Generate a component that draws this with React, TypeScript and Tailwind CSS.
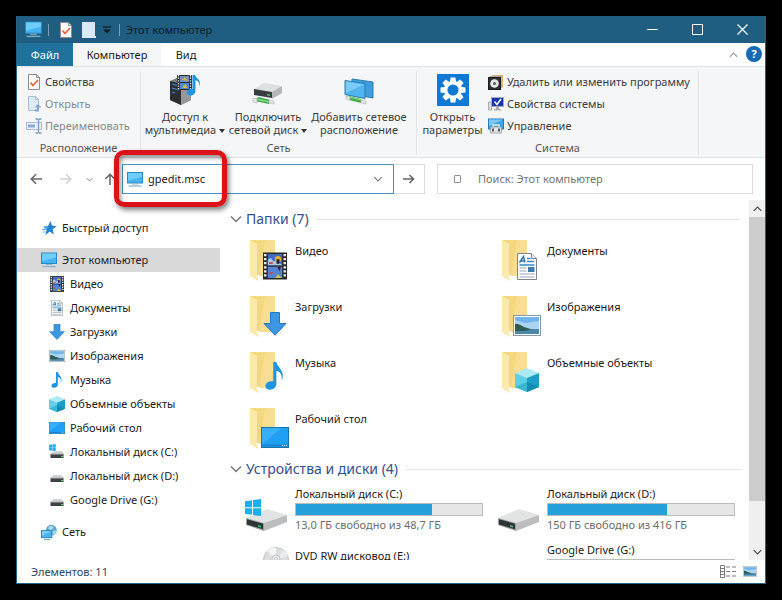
import React from "react";

type IconProps = { className?: string };

function Monitor({ className = "h-4 w-4" }: IconProps) {
  return (
    <svg viewBox="0 0 16 16" className={className} aria-hidden="true">
      <rect x="0.5" y="1" width="15" height="10.5" fill="#46b4f2" stroke="#2b87bd" />
      <path d="M1 1.5h14v4L1 9z" fill="#6fcdfb" />
      <path d="M5 12.5h6" stroke="#9fb4c2" />
      <path d="M1.5 14.5h13" stroke="#7fb2cf" strokeWidth="1.2" />
    </svg>
  );
}

function CheckDoc({ className = "h-4 w-4" }: IconProps) {
  return (
    <svg viewBox="0 0 16 16" className={className} aria-hidden="true">
      <path d="M2.5.5h8l3 3v12h-11z" fill="#fdfdfd" stroke="#8d8d8d" />
      <path d="M10.5.5v3h3" fill="none" stroke="#8d8d8d" />
      <path d="M4.5 8.5l2.5 3 5-5.5" fill="none" stroke="#e2653a" strokeWidth="1.7" />
    </svg>
  );
}

function OpenDoc({ className = "h-4 w-4" }: IconProps) {
  return (
    <svg viewBox="0 0 16 16" className={className} aria-hidden="true">
      <path d="M2.5.5h7l3 3v11h-10z" fill="#dfeaf7" stroke="#a9bdd6" />
      <path d="M9.500.5v3h3" fill="none" stroke="#a9bdd6" />
      <path d="M9 15.500h4v-4h2.500L12 8 8.500 11.500H11v2H9z" fill="#8aa6c9" />
    </svg>
  );
}

function RenameIcon() {
  return (
    <svg viewBox="0 0 16 16" className="h-4 w-4" aria-hidden="true">
      <rect x="0.5" y="4.500" width="15" height="7" fill="#e9f0f8" stroke="#a9bdd6" />
      <rect x="2" y="6.500" width="7" height="3" fill="#8fabcf" />
      <path d="M9.500 1h2l1 1 1-1h2M12.500 2v12M9.500 15h2l1-1 1 1h2" fill="none" stroke="#7f9cc2" strokeWidth="1.300" />
    </svg>
  );
}

function Note({ className = "h-4 w-4" }: IconProps) {
  return (
    <svg viewBox="0 0 16 16" className={className} aria-hidden="true">
      <path d="M7 0h1.800c.3 3 4.700 4.500 3.500 9.500-.2.800-.6.800-.5.200.3-2.800-1-4.200-3-4.700v7.600c0 1.800-1.700 3.200-3.600 3.200C3.700 15.800 2.500 15 2.500 13.700c0-1.700 2-3 4.500-2.700z" fill="#1e95e4" />
    </svg>
  );
}

function Film({ className = "h-4 w-4" }: IconProps) {
  return (
    <svg viewBox="0 0 16 18" className={className} aria-hidden="true">
      <rect width="16" height="18" fill="#282828" />
      <path d="M1.500 1v16M14.500 1v16" stroke="#f1f1f1" strokeWidth="1.600" strokeDasharray="1.500 1.200" />
      <rect x="3.200" y="1" width="9.600" height="7.500" fill="#3e6bc0" />
      <rect x="3.200" y="9.500" width="9.600" height="7.500" fill="#5185d4" />
      <path d="M3.200 5l2-1.500L7 6l2-1 3.800 3.500H3.200z" fill="#a9c9ec" />
      <circle cx="10" cy="4.500" r="2.100" fill="#e0b52c" />
      <path d="M9 4.500h2v3H9zM9.500 9.500h2.500l-1 3z" fill="#281d3c" />
      <path d="M4 6.500h2.500v1.200H4zM4 13h3l-1.500 2z" fill="#c94747" />
      <path d="M8 17l2-2.500 2.500 2.500z" fill="#d9c043" />
    </svg>
  );
}

function DocIcon({ className = "h-4 w-4" }: IconProps) {
  return (
    <svg viewBox="0 0 20 27" className={className} aria-hidden="true">
      <path d="M.500.500h14l5 5v21h-19z" fill="#fff" stroke="#7a858e" />
      <path d="M14.500.500v5h5" fill="#e9eef2" stroke="#7a858e" />
      <path d="M2.500 9.500l4-6 1.500 6M4 8h3.500" fill="none" stroke="#2c77b5" strokeWidth="1.500" />
      <path d="M10 5.500h3.500M10 8.500h7M2.500 12h15" stroke="#3888c6" strokeWidth="1.500" />
      <rect x="11" y="14" width="6.500" height="5" fill="#3e7cab" />
      <path d="M2.500 15h7M2.500 18h7M2.500 21h15M2.500 24h15" stroke="#9aa6b0" strokeWidth="1.200" />
    </svg>
  );
}

function DownArrow({ className = "h-4 w-4" }: IconProps) {
  return (
    <svg viewBox="0 0 24 24" className={className} aria-hidden="true">
      <path d="M7.500.500h9v11h6.500L12 23.300 1 11.500h6.500z" fill="#3b97e3" stroke="#2778bd" />
    </svg>
  );
}

function Picture({ className = "h-4 w-4" }: IconProps) {
  return (
    <svg viewBox="0 0 28 21" className={className} aria-hidden="true">
      <rect x="0.500" y="0.500" width="27" height="20" fill="#fff" stroke="#8799a8" />
      <rect x="2" y="2" width="24" height="17" fill="#a9d6f3" />
      <path d="M2 2h24v4L12 8 2 5z" fill="#72b5e8" />
      <path d="M2 9c4-1 6 2 9 3l10 3H2z" fill="#315e4b" />
      <path d="M2 14h24v5H2z" fill="#4d87a8" />
      <path d="M2 14h18l-8 2H2z" fill="#2f5b60" />
    </svg>
  );
}

function Cube({ className = "h-4 w-4" }: IconProps) {
  return (
    <svg viewBox="0 0 24 24" className={className} aria-hidden="true">
      <path d="M12 0l12 5-12 5L0 5z" fill="#aeeaf5" />
      <path d="M0 5l12 5v14L0 19z" fill="#5fcfe5" />
      <path d="M24 5l-12 5v14l12-5z" fill="#1b9fc4" />
      <path d="M0 19l12-5v10z" fill="#37b6d3" />
      <path d="M24 19l-12-5v10z" fill="#128cb4" />
    </svg>
  );
}

function DesktopIcon({ className = "h-4 w-4" }: IconProps) {
  return (
    <svg viewBox="0 0 28 21" className={className} aria-hidden="true">
      <rect x="0.500" y="0.500" width="27" height="20" fill="#1fa0f4" stroke="#1772ae" />
      <path d="M1 1h20L1 17z" fill="#39aef9" />
      <path d="M1 18.500h26" stroke="#1783d0" strokeWidth="2" />
      <path d="M21 18.500h5" stroke="#d4eefe" strokeDasharray="1 1" />
    </svg>
  );
}

function WinFlag() {
  return <path d="M0 2.300l7-1v6.900H0zM8 1.100L16 0v8.200H8zM0 9.200h7v6.600l-7-1zM8 9.200h8V17l-8-1z" fill="#17b1e8" />;
}

function SmallDrive({ windows = false }: { windows?: boolean }) {
  return (
    <svg viewBox="0 0 16 16" className="h-4 w-4" aria-hidden="true">
      <path d="M4.500 7h8l2.500 3H1.500z" fill="#cfd1d2" />
      <rect x="1.500" y="10" width="13" height="4" fill="#3d4144" />
      <path d="M1.500 10.300h13" stroke="#8a8d90" />
      <rect x="12" y="12" width="2" height="1" fill="#58d66c" />
      {windows && (
        <g transform="translate(0 0) scale(.42)">
          <rect x="-1" y="-1" width="18" height="19" fill="#fff" />
          <WinFlag />
        </g>
      )}
    </svg>
  );
}

function LargeDrive({ windows = false }: { windows?: boolean }) {
  return (
    <svg viewBox="0 0 44 34" className="h-[34px] w-[44px]" aria-hidden="true">
      <path d="M1 19L22 10l20 6-23 8z" fill="#e2e3e3" />
      <path d="M19 24l23-8v7L19 32z" fill="#bcbdbe" />
      <path d="M1 19l18 5v8L1 26z" fill="#9a9c9d" />
      <path d="M2 20.300l16 4.400v5.600L2 25.500z" fill="#303335" />
      <path d="M13 26l3 .800v1.700l-3-.800z" fill="#38b765" />
      {windows && <WinFlag />}
    </svg>
  );
}

function Disc() {
  return (
    <svg viewBox="0 0 26 26" className="h-[26px] w-[26px]" aria-hidden="true">
      <circle cx="13" cy="13" r="12.500" fill="#dcdedf" stroke="#bfc2c4" />
      <path d="M13 13L4 4a13 13 0 0 1 9-3.500z" fill="#f4f5f5" />
      <path d="M13 13l12-4a12 12 0 0 0-5-6z" fill="#eceeee" />
      <circle cx="13" cy="12" r="4" fill="#f3f4f4" stroke="#b9bdbf" />
      <circle cx="13" cy="12" r="1.500" fill="#fff" stroke="#b9bdbf" />
    </svg>
  );
}

function Star() {
  return (
    <svg viewBox="0 0 16 16" className="h-4 w-4" aria-hidden="true">
      <path d="M9.500 1l1.400 4.600 4.800.600-4 3 1.200 5.200-4.300-2.800-4.200 3.600 1.200-5.500L2 6.700l5-.7z" fill="#2583d3" />
      <path d="M3 6.700l4-.2-1.500 4z" fill="#58ace9" />
      <path d="M1 9.500h3.500M2 12h2.500" stroke="#58ace9" strokeWidth="1.200" />
    </svg>
  );
}

function NetworkIcon() {
  return (
    <svg viewBox="0 0 17 17" className="h-[17px] w-[17px]" aria-hidden="true">
      <circle cx="11" cy="6" r="5.700" fill="#5aa6cf" />
      <path d="M8 2.500c2-2 5-1 5.500 1L11 6 8 5zM12 7l4-1-1 4-3 1z" fill="#a5dbe4" />
      <rect x="0.500" y="6.500" width="11" height="7.500" fill="#49b3f0" stroke="#2d7fb5" />
      <path d="M1 7h10l-10 5z" fill="#7fd0fb" />
      <path d="M3 16h7" stroke="#7aa6c4" strokeWidth="1.200" />
    </svg>
  );
}

function MediaServer() {
  return (
    <svg viewBox="0 0 32 32" className="h-8 w-8" aria-hidden="true">
      <path d="M1 7l9-4 12 3v20l-10 5L1 26z" fill="#7b7e81" />
      <path d="M1 7l11 3v21L1 26z" fill="#2b2e31" />
      <path d="M3 10l7 2M3 14l7 2M3 18l3 1" stroke="#3e92d9" strokeWidth="1.300" />
      <path d="M12 16l10-3v13l-10 5z" fill="#96999b" />
      <rect x="8" y="1" width="15" height="15" fill="#282828" />
      <path d="M9.500 1v15M21.500 1v15" stroke="#eee" strokeWidth="1.400" strokeDasharray="1.400 1.200" />
      <rect x="11" y="2" width="9" height="6" fill="#728cc4" />
      <rect x="11" y="9" width="9" height="6" fill="#5385d3" />
      <path d="M13 6l3-3 3 4zM13 14l3-4 3 4z" fill="#d0b84c" />
      <path d="M23.500 1H26c.500 3 6 4 4.800 10-.300 1-.800 1-.600.200.3-3-1.200-4.500-3.800-5V17c0 2.500-2.300 4.500-5 4.500-2.200 0-3.600-1.200-3.600-3 0-2.300 2.500-4 5.700-3.500z" fill="#1e95e4" />
    </svg>
  );
}

function NetDrive() {
  return (
    <svg viewBox="0 0 32 32" className="h-8 w-8" aria-hidden="true">
      <path d="M2 15l10-6 18 3-10 6z" fill="#dedfe0" />
      <path d="M20 18l10-6v7l-10 6z" fill="#b4b6b8" />
      <path d="M2 15l18 3v6L2 21z" fill="#3a3d40" />
      <path d="M15 20l3 .500v1.500l-3-.500z" fill="#41c66b" />
      <path d="M3 25l4-2 11 3-1 4-5-1-9-2z" fill="#42ab4a" />
      <path d="M4 25l13 3" stroke="#84d884" strokeWidth="1.500" />
      <path d="M1 24l4 1v4l-4-1zM17 26l5 1v3l-5-1z" fill="#e4e6e7" stroke="#a4a8aa" strokeWidth=".5" />
    </svg>
  );
}

function NetPlace() {
  return (
    <svg viewBox="0 0 32 32" className="h-8 w-8" aria-hidden="true">
      <path d="M9 5l21 3v16L9 20z" fill="#3d9fdd" stroke="#2c7cae" />
      <path d="M2 6.500l20 3v15l-20-4z" fill="#50b4ee" stroke="#2c7cae" />
      <path d="M3 7.500l18 3L3 19z" fill="#7ccbf7" />
      <path d="M6 22l12 3v4L6 26z" fill="#42ab4a" />
      <path d="M6 23l12 3" stroke="#8be08b" />
      <path d="M3 22l4 1v3l-4-1zM18 26l5 1v3l-5-1z" fill="#e4e6e7" stroke="#a4a8aa" strokeWidth=".5" />
    </svg>
  );
}

function SettingsTile() {
  const teeth = [0, 45, 90, 135, 180, 225, 270, 315];
  return (
    <svg viewBox="0 0 32 32" className="h-8 w-8" aria-hidden="true">
      <rect width="32" height="32" fill="#0f79d3" />
      {teeth.map((angle) => (
        <path key={angle} d="M13.600 3.500h4.800l.8 5h-6.400z" fill="#fff" transform={`rotate(${angle} 16 16)`} />
      ))}
      <circle cx="16" cy="16" r="7.300" fill="none" stroke="#fff" strokeWidth="3.400" />
    </svg>
  );
}

function ProgramIcon() {
  return (
    <svg viewBox="0 0 16 16" className="h-4 w-4" aria-hidden="true">
      <path d="M4 1h11v12l-3 2V3H4z" fill="#d9b469" />
      <path d="M2 2h11v2H2z" fill="#9fa2a5" />
      <rect x="0.500" y="3.500" width="12" height="12" fill="#2d2e30" stroke="#1a1a1b" />
      <circle cx="6.500" cy="9.500" r="4.300" fill="#e6e8ea" />
      <circle cx="6.500" cy="9.500" r="1.500" fill="#55585b" />
    </svg>
  );
}

function SystemIcon() {
  return (
    <svg viewBox="0 0 16 16" className="h-4 w-4" aria-hidden="true">
      <path d="M.500 6h3v8h-3z" fill="#d9dbdd" stroke="#8e9296" strokeWidth=".7" />
      <rect x="3.500" y="1.500" width="12" height="9" fill="#1c33b0" stroke="#a5abb5" />
      <path d="M6.500 5.500L9 8.500l4-5.500" fill="none" stroke="#fff" strokeWidth="1.500" />
      <path d="M8 11h3v2h2v1.500H6V13h2z" fill="#a9adb2" />
    </svg>
  );
}

function ManageIcon() {
  return (
    <svg viewBox="0 0 16 16" className="h-4 w-4" aria-hidden="true">
      <rect x="0.500" y="1" width="15" height="10" fill="#3aa6e8" stroke="#2a79ad" />
      <path d="M1 1.500h14L1 8z" fill="#79c8f5" />
      <path d="M5 9V7h6v2" fill="none" stroke="#e8eaec" strokeWidth="1.300" />
      <rect x="2.500" y="9" width="11" height="6" fill="#e3e5e7" stroke="#8b9095" strokeWidth=".7" />
      <path d="M5 10.500v3M11 10.500v3" stroke="#4a4e52" strokeWidth="1.800" />
    </svg>
  );
}

function Folder({ children }: { children: React.ReactNode }) {
  return (
    <span className="relative block h-[44px] w-[44px] shrink-0">
      <svg viewBox="0 0 44 44" className="h-[44px] w-[44px]" aria-hidden="true">
        <path d="M5 0h25v36H12z" fill="#f5d77e" />
        <path d="M20 0h10v36H14z" fill="#f8de90" />
        <path d="M5 0l9 5v31l-1 5-8-5z" fill="#fbe9ae" />
        <path d="M13 5v32" stroke="#e6c366" />
        <path d="M11 35h3v5z" fill="#fff" />
      </svg>
      <span className="absolute right-0 bottom-1 flex w-[28px] justify-center">{children}</span>
    </span>
  );
}

function Arrow({ d, className }: { d: string; className: string }) {
  return (
    <svg viewBox="0 0 14 14" className={`h-3 w-3 ${className}`} aria-hidden="true">
      <path d={d} fill="none" stroke="currentColor" strokeWidth="1.800" />
    </svg>
  );
}

function Chevron({ className = "h-2 w-3", up = false }: { className?: string; up?: boolean }) {
  return (
    <svg viewBox="0 0 12 8" className={className} aria-hidden="true">
      <path d={up ? "M1 6.500l5-5 5 5" : "M1 1.500l5 5 5-5"} fill="none" stroke="currentColor" strokeWidth="1.500" />
    </svg>
  );
}

function Caret() {
  return <span className="ml-[3px] inline-block border-x-[3px] border-t-4 border-x-transparent border-t-[#333] align-middle" />;
}

const navItems = [
  { name: "Видео", icon: <Film className="h-4 w-[14px]" /> },
  { name: "Документы", icon: <DocIcon className="h-4 w-3" /> },
  { name: "Загрузки", icon: <DownArrow /> },
  { name: "Изображения", icon: <Picture /> },
  { name: "Музыка", icon: <Note /> },
  { name: "Объемные объекты", icon: <Cube /> },
  { name: "Рабочий стол", icon: <DesktopIcon /> },
  { name: "Локальный диск (C:)", icon: <SmallDrive windows /> },
  { name: "Локальный диск (D:)", icon: <SmallDrive /> },
  { name: "Google Drive (G:)", icon: <SmallDrive /> },
];

const folders = [
  { name: "Видео", icon: <Film className="h-[28px] w-[24px]" /> },
  { name: "Документы", icon: <DocIcon className="h-[27px] w-5" /> },
  { name: "Загрузки", icon: <DownArrow className="h-6 w-6" /> },
  { name: "Изображения", icon: <Picture className="h-[21px] w-7" /> },
  { name: "Музыка", icon: <Note className="h-8 w-8" /> },
  { name: "Объемные объекты", icon: <Cube className="h-6 w-6" /> },
  { name: "Рабочий стол", icon: <DesktopIcon className="h-[21px] w-7" /> },
];

function NavLink({ name, icon, child, active }: { name: string; icon: React.ReactNode; child?: boolean; active?: boolean }) {
  return (
    <a
      href="#"
      className={`flex h-6 items-center gap-[5px] whitespace-nowrap ${child ? "pl-8" : "pl-6"} ${active ? "bg-[#d9d9d9]" : ""}`}
    >
      <span className="flex w-4 shrink-0 justify-center">{icon}</span>
      {name}
    </a>
  );
}

function SectionHeader({ children }: { children: React.ReactNode }) {
  return (
    <h2 className="flex h-6 items-center gap-2 pr-2">
      <button className="flex items-center gap-1 text-[14px] whitespace-nowrap text-[#33508f]">
        <Chevron className="h-2 w-3 text-[#777]" />
        {children}
      </button>
      <span className="h-px flex-1 bg-[#e5e5e5]" />
    </h2>
  );
}

function DriveTile({ name, free, used, windows }: { name: string; free: string; used: number; windows?: boolean }) {
  return (
    <a href="#" className="flex h-14 gap-[6px]">
      <span className="flex w-[44px] shrink-0 pt-[14px]">
        <LargeDrive windows={windows} />
      </span>
      <span className="flex w-[188px] flex-col whitespace-nowrap">
        <span className="h-[18px] leading-[18px]">{name}</span>
        <span
          role="progressbar"
          aria-label={name}
          aria-valuenow={used}
          className="block h-[13px] shrink-0 border border-[#bcbcbc] bg-[#e6e6e6]"
        >
          <span className="block h-full bg-[#26a0da]" style={{ width: `${used}%` }} />
        </span>
        <span className="leading-[18px] text-[#6d6d6d]">{free}</span>
      </span>
    </a>
  );
}

function RibbonGroup({ title, className = "", children }: { title: string; className?: string; children: React.ReactNode }) {
  return (
    <section className={`mt-1 mb-[2px] flex flex-col border-r border-[#e2e3e4] ${className}`} aria-label={title}>
      <div className="flex flex-1">{children}</div>
      <p className="text-center leading-[14px] text-[#555]">{title}</p>
    </section>
  );
}

function RibbonRow({ icon, children, muted }: { icon: React.ReactNode; children: React.ReactNode; muted?: boolean }) {
  return (
    <button className={`flex h-[22px] items-center gap-[3px] whitespace-nowrap ${muted ? "text-[#8a8a8a]" : ""}`}>
      {icon}
      {children}
    </button>
  );
}

function RibbonButton({ icon, className, children }: { icon: React.ReactNode; className: string; children: React.ReactNode }) {
  return (
    <button className={`flex shrink-0 flex-col items-center gap-1 pt-[3px] leading-[13px] whitespace-nowrap ${className}`}>
      {icon}
      <span>{children}</span>
    </button>
  );
}

export default function App() {
  return (
    <div className="flex h-screen bg-black p-4 font-['Noto_Sans','Open_Sans',sans-serif] text-[11px] leading-4 text-[#1b1b1b]">
      <main className="flex min-w-0 flex-1 flex-col overflow-hidden border border-t-0 border-[#236486] bg-white">
        <header className="flex h-[27px] shrink-0 items-center bg-[#1f5e80] pl-2">
          <Monitor className="h-[17px] w-[17px]" />
          <span className="ml-[6px] h-3 w-px bg-[#7ba0b4]" />
          <button aria-label="Свойства" className="ml-[9px]">
            <CheckDoc />
          </button>
          <button aria-label="Новая папка" className="ml-2">
            <svg viewBox="0 0 14 16" className="h-4 w-[14px]" aria-hidden="true">
              <path d="M0 0h13v14h1v2H0z" fill="#dce8f7" />
            </svg>
          </button>
          <button aria-label="Настроить панель" className="ml-[7px]">
            <svg viewBox="0 0 8 8" className="h-2 w-2" aria-hidden="true">
              <path d="M0 1h8" stroke="#101b22" strokeWidth="1.300" />
              <path d="M0 3.500h8L4 7.500z" fill="#101b22" />
            </svg>
          </button>
          <span className="ml-2 h-3 w-px bg-[#7ba0b4]" />
          <h1 className="ml-[6px] flex-1 text-[11px] text-[#0b1c27]">Этот компьютер</h1>
          <div className="flex text-white">
            <button aria-label="Свернуть" className="flex w-[45px] justify-center">
              <svg viewBox="0 0 11 11" className="h-[11px] w-[11px]"><path d="M0 5.500h11" stroke="currentColor" /></svg>
            </button>
            <button aria-label="Развернуть" className="flex w-[45px] justify-center">
              <svg viewBox="0 0 11 11" className="h-[11px] w-[11px]"><path d="M.500.500h10v10H.500z" fill="none" stroke="currentColor" /></svg>
            </button>
            <button aria-label="Закрыть" className="flex w-[45px] justify-center">
              <svg viewBox="0 0 11 11" className="h-[11px] w-[11px]"><path d="M.500.500l10 10M10.500.500l-10 10" stroke="currentColor" strokeWidth="1.200" /></svg>
            </button>
          </div>
        </header>

        <nav className="flex h-[23px] shrink-0 items-stretch" aria-label="Вкладки ленты">
          <button className="w-14 bg-[#1f729c] text-white">Файл</button>
          <button className="w-[88px] bg-[#f5f6f7]">Компьютер</button>
          <button className="w-[50px]">Вид</button>
          <span className="flex-1" />
          <button aria-label="Свернуть ленту" className="px-2 text-[#9a9a9a]">
            <Chevron up className="h-[6px] w-[9px]" />
          </button>
          <button
            aria-label="Справка"
            className="mt-[3px] mr-[3px] h-4 w-4 rounded-full bg-[#1569b5] text-center font-bold text-white"
          >
            ?
          </button>
        </nav>

        <div className="flex h-[92px] shrink-0 overflow-hidden border-t border-b border-[#e1e2e4] bg-[#f5f6f7] text-[#3c3c3c]">
          <RibbonGroup title="Расположение" className="w-[124px] shrink-0">
            <div className="flex flex-col pl-[9px]">
              <RibbonRow icon={<CheckDoc />}>Свойства</RibbonRow>
              <RibbonRow muted icon={<OpenDoc />}>Открыть</RibbonRow>
              <RibbonRow muted icon={<RenameIcon />}>Переименовать</RibbonRow>
            </div>
          </RibbonGroup>
          <RibbonGroup title="Сеть" className="w-[276px] shrink-0">
            <RibbonButton icon={<MediaServer />} className="w-[88px]">
              Доступ к<br />мультимедиа<Caret />
            </RibbonButton>
            <RibbonButton icon={<NetDrive />} className="w-[78px]">
              Подключить<br />сетевой диск<Caret />
            </RibbonButton>
            <RibbonButton icon={<NetPlace />} className="w-[104px]">
              Добавить сетевое<br />расположение
            </RibbonButton>
          </RibbonGroup>
          <RibbonGroup title="Система" className="w-[282px] shrink-0">
            <RibbonButton icon={<SettingsTile />} className="w-[71px]">
              Открыть<br />параметры
            </RibbonButton>
            <div className="flex flex-col">
              <RibbonRow icon={<ProgramIcon />}>Удалить или изменить программу</RibbonRow>
              <RibbonRow icon={<SystemIcon />}>Свойства системы</RibbonRow>
              <RibbonRow icon={<ManageIcon />}>Управление</RibbonRow>
            </div>
          </RibbonGroup>
        </div>

        <div className="flex h-[42px] shrink-0 items-center pr-3 pl-[13px]">
          <button aria-label="Назад"><Arrow className="text-[#666]" d="M14 7H1.500M7 1.500L1.500 7 7 12.500" /></button>
          <button aria-label="Вперед" className="ml-[18px]"><Arrow className="text-[#d2d2d2]" d="M0 7h12.500M7 1.500L12.500 7 7 12.500" /></button>
          <button aria-label="Последние расположения" className="ml-[14px] text-[#777]"><Chevron className="h-[5px] w-[7px]" /></button>
          <button aria-label="Вверх" className="ml-[11px]"><Arrow className="text-[#666]" d="M7 14V1.500M1.500 7L7 1.500 12.500 7" /></button>
          <div className="relative ml-[6px] flex h-[30px] flex-[266] items-center border border-[#4a93bf] pl-1">
            <Monitor className="h-[17px] w-4 shrink-0" />
            <input aria-label="Адрес" defaultValue="gpedit.msc" className="ml-[5px] min-w-0 flex-1 outline-none" />
            <button aria-label="Показать адреса" className="mr-[10px] text-[#777]"><Chevron className="h-[6px] w-[10px]" /></button>
            <span className="pointer-events-none absolute -top-[15px] -left-[9px] z-10 h-[57px] w-[113px] rounded-[10px] border-[5px] border-[#dc1219] shadow-[2px_3px_5px_rgba(0,0,0,0.5),inset_2px_3px_4px_rgba(0,0,0,0.4)]" />
          </div>
          <button aria-label="Перейти" className="flex h-[30px] w-[31px] items-center justify-center border border-l-0 border-[#dcdcdc]">
            <svg viewBox="0 0 12 10" className="h-[10px] w-3" aria-hidden="true">
              <path d="M0 5h10.500M6.500 1l4 4-4 4" fill="none" stroke="#666" strokeWidth="1.600" />
            </svg>
          </button>
          <label className="ml-3 flex h-[30px] flex-[298] items-center border border-[#dcdcdc] pl-4">
            <span className="h-2 w-[7px] rounded-[1px] border border-[#909090]" />
            <input placeholder="Поиск: Этот компьютер" aria-label="Поиск" className="ml-[17px] min-w-0 flex-1 outline-none placeholder:text-[#757575]" />
          </label>
        </div>

        <div className="flex min-h-0 flex-1">
          <nav className="w-[203px] shrink-0 overflow-hidden pt-4" aria-label="Область навигации">
            <NavLink name="Быстрый доступ" icon={<Star />} />
            <div className="my-2">
              <NavLink active name="Этот компьютер" icon={<Monitor />} />
              {navItems.map((item) => (
                <NavLink key={item.name} child {...item} />
              ))}
            </div>
            <NavLink name="Сеть" icon={<NetworkIcon />} />
          </nav>

          <div className="min-w-0 flex-1 overflow-hidden pt-[7px] pl-[10px]">
            <SectionHeader>Папки (7)</SectionHeader>
            <div className="mt-[3px] grid grid-cols-[repeat(auto-fill,minmax(240px,1fr))] pl-[15px]">
              {folders.map((folder) => (
                <a key={folder.name} href="#" className="flex h-14 gap-[6px] pt-[6px]">
                  <Folder>{folder.icon}</Folder>
                  <span className="pt-[3px]">{folder.name}</span>
                </a>
              ))}
            </div>
            <div className="mt-[-1px]">
              <SectionHeader>Устройства и диски (4)</SectionHeader>
            </div>
            <div className="mt-1 grid grid-cols-[repeat(auto-fill,minmax(240px,1fr))] pl-[15px]">
              <DriveTile windows name="Локальный диск (C:)" used={73} free="13,0 ГБ свободно из 48,7 ГБ" />
              <DriveTile name="Локальный диск (D:)" used={64} free="150 ГБ свободно из 416 ГБ" />
              <a href="#" className="flex h-14 gap-[6px] pt-[6px]">
                <span className="flex w-[44px] shrink-0 justify-end"><Disc /></span>
                <span className="leading-[18px]">DVD RW дисковод (E:)</span>
              </a>
              <DriveTile name="Google Drive (G:)" used={10} free="" />
            </div>
          </div>

          <div className="flex w-4 shrink-0 flex-col bg-[#f0f0f0]" aria-hidden="true">
            <span className="flex h-[17px] items-center justify-center text-[#444]"><Chevron up className="h-[6px] w-[9px]" /></span>
            <span className="flex flex-1 flex-col">
              <span className="h-[87%] bg-[#cdcdcd]" />
            </span>
            <span className="flex h-[17px] items-center justify-center text-[#444]"><Chevron className="h-[6px] w-[9px]" /></span>
          </div>
        </div>

        <footer className="flex h-[23px] shrink-0 items-center gap-[7px] pr-2 pl-[14px] text-[#2f4766]">
          <span className="flex-1">Элементов: 11</span>
          <button aria-label="Таблица">
            <svg viewBox="0 0 16 13" className="h-[13px] w-4" aria-hidden="true">
              <path d="M.500.500h4v12h-4zM.500 3.500h4M.500 6.500h4M.500 9.500h4" fill="none" stroke="#7a7a7a" />
              <path d="M6 2h4M6 6.500h4M6 11h4M12 2h4M12 6.500h4M12 11h4" stroke="#7a7a7a" />
            </svg>
          </button>
          <button aria-label="Крупные значки">
            <Picture className="h-[11px] w-[14px]" />
          </button>
        </footer>
      </main>
    </div>
  );
}
